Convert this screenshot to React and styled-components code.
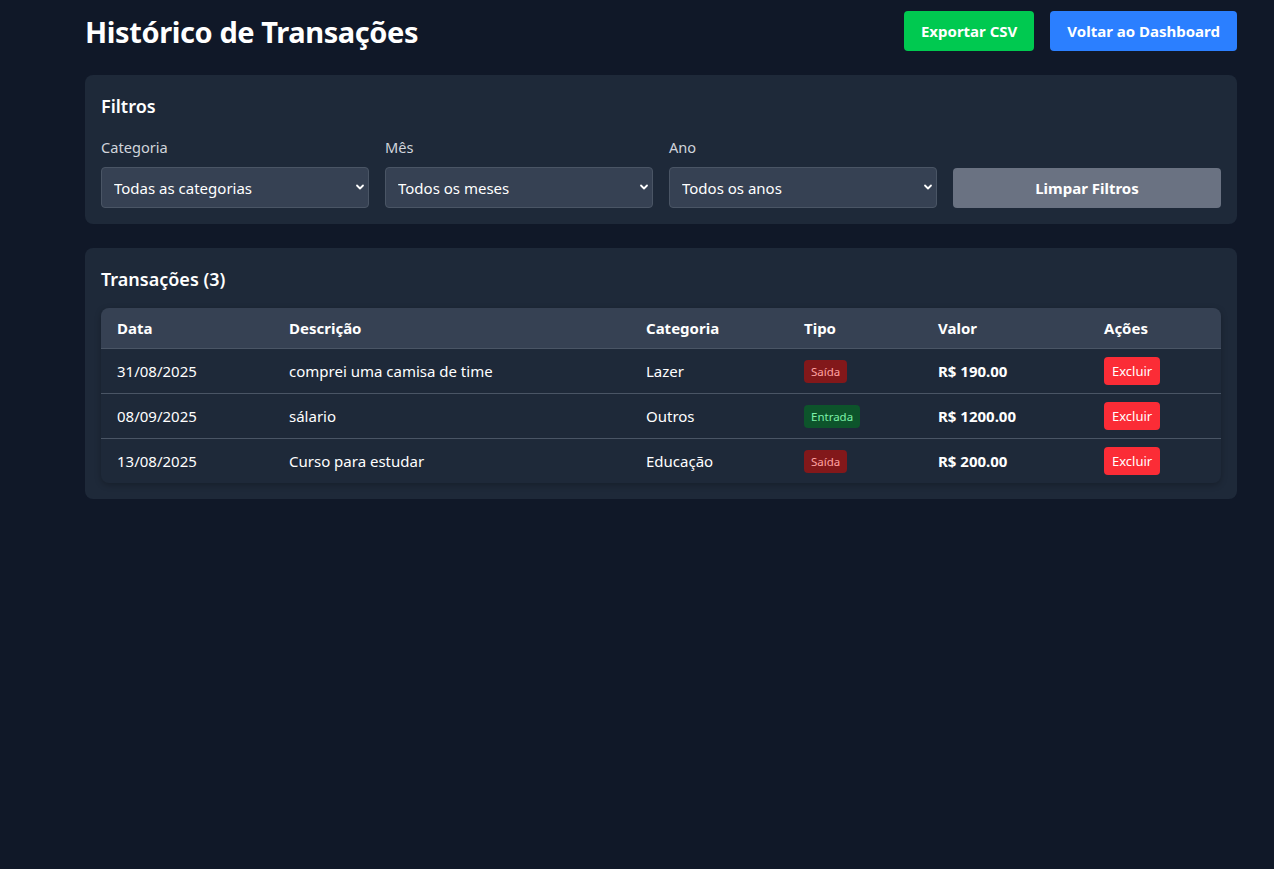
import styled, { createGlobalStyle } from "styled-components";

const GlobalStyle = createGlobalStyle`
  body {
    margin: 0;
    background: #101828;
    font-family: "Noto Sans", "Open Sans", Arial, sans-serif;
    color: #ffffff;
  }
`;

const transactions = [
  { date: "31/08/2025", description: "comprei uma camisa de time", category: "Lazer", type: "saida", value: "R$ 190.00" },
  { date: "08/09/2025", description: "sálario", category: "Outros", type: "entrada", value: "R$ 1200.00" },
  { date: "13/08/2025", description: "Curso para estudar", category: "Educação", type: "saida", value: "R$ 200.00" },
];

const Chevron = () => (
  <ChevronIcon width="10" height="10" viewBox="0 0 10 10">
    <path d="M2 3.5 L5 6.5 L8 3.5" fill="none" stroke="#ffffff" strokeWidth="1.8" strokeLinecap="round" strokeLinejoin="round" />
  </ChevronIcon>
);

const FilterSelect = ({ label, value }) => (
  <Field>
    <Label>{label}</Label>
    <SelectWrap>
      <Select defaultValue={value}>
        <option>{value}</option>
      </Select>
      <Chevron />
    </SelectWrap>
  </Field>
);

const App = () => {
  return (
    <Page>
      <GlobalStyle />
      <Header>
        <Title>Histórico de Transações</Title>
        <HeaderActions>
          <ActionButton $color="#00c950">Exportar CSV</ActionButton>
          <ActionButton $color="#2b7fff">Voltar ao Dashboard</ActionButton>
        </HeaderActions>
      </Header>

      <Card>
        <CardTitle $gap={21}>Filtros</CardTitle>
        <FilterGrid>
          <FilterSelect label="Categoria" value="Todas as categorias" />
          <FilterSelect label="Mês" value="Todos os meses" />
          <FilterSelect label="Ano" value="Todos os anos" />
          <Field>
            <ClearButton>Limpar Filtros</ClearButton>
          </Field>
        </FilterGrid>
      </Card>

      <Card>
        <CardTitle $gap={18}>Transações ({transactions.length})</CardTitle>
        <TableWrap>
          <Table>
            <colgroup>
              <col style={{ width: 172 }} />
              <col style={{ width: 357 }} />
              <col style={{ width: 158 }} />
              <col style={{ width: 134 }} />
              <col style={{ width: 166 }} />
              <col />
            </colgroup>
            <thead>
              <tr>
                <Th>Data</Th>
                <Th>Descrição</Th>
                <Th>Categoria</Th>
                <Th>Tipo</Th>
                <Th>Valor</Th>
                <Th>Ações</Th>
              </tr>
            </thead>
            <tbody>
              {transactions.map((t) => (
                <Row key={t.date + t.description}>
                  <Td>{t.date}</Td>
                  <Td>{t.description}</Td>
                  <Td>{t.category}</Td>
                  <Td>
                    <Badge $type={t.type}>{t.type === "entrada" ? "Entrada" : "Saída"}</Badge>
                  </Td>
                  <Td $bold>{t.value}</Td>
                  <Td>
                    <DeleteButton>Excluir</DeleteButton>
                  </Td>
                </Row>
              ))}
            </tbody>
          </Table>
        </TableWrap>
      </Card>
    </Page>
  );
};

const Page = styled.div`
  padding: 11px 37px 40px 85px;
  display: flex;
  flex-direction: column;
  gap: 24px;
`;

const Header = styled.header`
  display: flex;
  justify-content: space-between;
  align-items: center;
  height: 40px;
`;

const Title = styled.h1`
  margin: 0;
  font-size: 29px;
  font-weight: 700;
  letter-spacing: -0.4px;
`;

const HeaderActions = styled.div`
  display: flex;
  gap: 16px;
`;

const ActionButton = styled.button`
  height: 40px;
  padding: 0 17px;
  border: none;
  border-radius: 4px;
  background: ${(p) => p.$color};
  color: #ffffff;
  font-family: inherit;
  font-size: 15px;
  font-weight: 700;
  cursor: pointer;
`;

const Card = styled.section`
  background: #1e2939;
  border-radius: 8px;
  padding: 16px;
`;

const CardTitle = styled.h2`
  margin: 4px 0 ${(p) => p.$gap}px;
  font-size: 18px;
  font-weight: 600;
  line-height: 22px;
`;

const FilterGrid = styled.div`
  display: grid;
  grid-template-columns: repeat(4, 1fr);
  gap: 16px;
  align-items: end;
`;

const Field = styled.div`
  display: flex;
  flex-direction: column;
  gap: 11px;
`;

const Label = styled.label`
  font-size: 14.6px;
  color: #d1d5dc;
  line-height: 18px;
`;

const SelectWrap = styled.div`
  position: relative;
`;

const Select = styled.select`
  width: 100%;
  height: 41px;
  padding: 0 30px 0 12px;
  appearance: none;
  background: #364153;
  border: 1px solid #4a5565;
  border-radius: 4px;
  color: #ffffff;
  font-family: inherit;
  font-size: 15px;
`;

const ChevronIcon = styled.svg`
  position: absolute;
  right: 4px;
  top: 15px;
  pointer-events: none;
`;

const ClearButton = styled.button`
  height: 40px;
  border: none;
  border-radius: 4px;
  background: #6a7282;
  color: #ffffff;
  font-family: inherit;
  font-size: 15px;
  font-weight: 700;
`;

const TableWrap = styled.div`
  border-radius: 8px;
  overflow: hidden;
  box-shadow: 0 2px 6px rgba(0, 0, 0, 0.25);
`;

const Table = styled.table`
  width: 100%;
  border-collapse: collapse;
  table-layout: fixed;
`;

const Th = styled.th`
  background: #364153;
  height: 40px;
  padding: 0 16px;
  text-align: left;
  font-size: 15px;
  font-weight: 700;
  border-bottom: 1px solid #4a5565;
`;

const Row = styled.tr`
  & + & td {
    border-top: 1px solid #4a5565;
  }
`;

const Td = styled.td`
  height: 44px;
  padding: 0 16px;
  font-size: 15px;
  font-weight: ${(p) => (p.$bold ? 700 : 400)};
`;

const Badge = styled.span`
  display: inline-block;
  padding: 3px 7px;
  border-radius: 4px;
  font-size: 11.5px;
  line-height: 17px;
  background: ${(p) => (p.$type === "entrada" ? "#0d542b" : "#82181a")};
  color: ${(p) => (p.$type === "entrada" ? "#7bf1a8" : "#ffa2a2")};
`;

const DeleteButton = styled.button`
  height: 28px;
  padding: 0 8px;
  border: none;
  border-radius: 4px;
  background: #fb2c36;
  color: #ffffff;
  font-family: inherit;
  font-size: 13px;
  cursor: pointer;
`;

export default App;
